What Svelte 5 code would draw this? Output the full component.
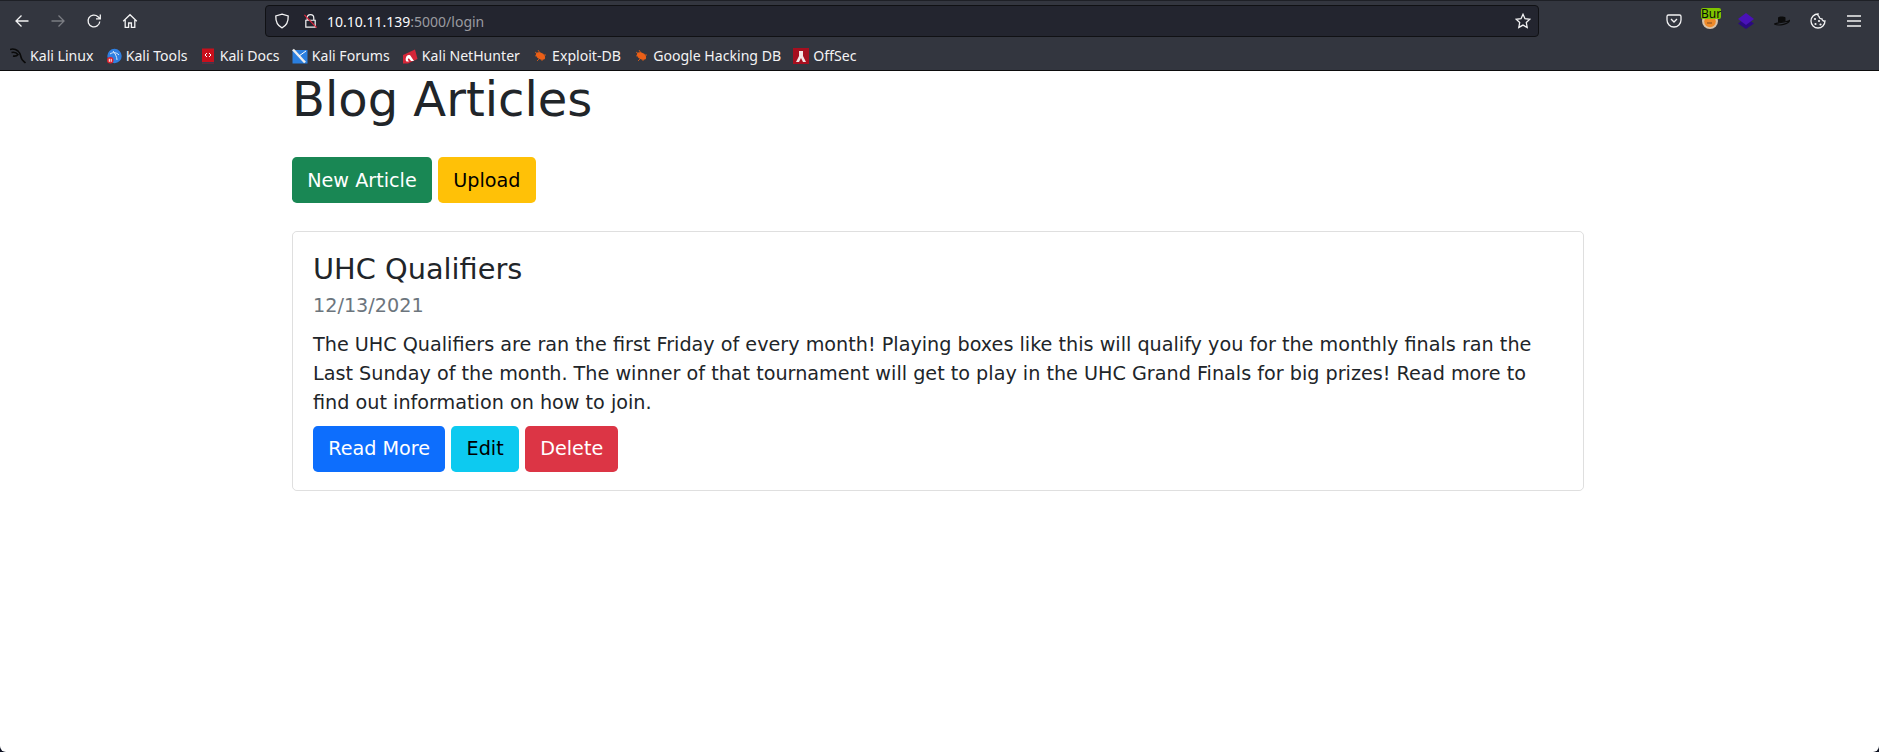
<script>
  const bookmarks = [
    { name: 'Kali Linux', icon: 'kali' },
    { name: 'Kali Tools', icon: 'tools' },
    { name: 'Kali Docs', icon: 'docs' },
    { name: 'Kali Forums', icon: 'forums' },
    { name: 'Kali NetHunter', icon: 'hunter' },
    { name: 'Exploit-DB', icon: 'bug' },
    { name: 'Google Hacking DB', icon: 'bug' },
    { name: 'OffSec', icon: 'offsec' }
  ];
</script>

<div class="page">
  <header class="chrome">
    <div class="nav">
      <div class="nav-buttons">
        <svg class="ico" viewBox="0 0 16 16"><path d="M14.5 8H2M7.5 2.5 2 8l5.500 5.500" /></svg>
        <svg class="ico dim" viewBox="0 0 16 16"><path d="M1.500 8H14M8.500 2.500 14 8l-5.500 5.500" /></svg>
        <svg class="ico" viewBox="0 0 16 16"><path d="M13.800 8.500A5.900 5.900 0 1 1 12 3.700L14 5.600M14.300 1.500v4.300H10" /></svg>
        <svg class="ico" viewBox="0 0 16 16"><path d="M1.200 8.200 8 1.700l6.800 6.500M3.200 7v7.300h3.400V10h2.800v4.300h3.400V7" /></svg>
      </div>
      <div class="urlbar">
        <svg class="ico shield" viewBox="0 0 16 16"><path d="M8 1.200 14.200 3c.2 5.500-1.500 9.600-6.200 11.800C3.300 12.600 1.600 8.500 1.800 3z" /></svg>
        <svg class="ico lock" viewBox="0 0 16 16">
          <path d="M4.500 7V4.800a3.500 3.500 0 0 1 7 0V7M3 7.200h10v7.300H3z" />
          <path class="slash" d="M1.500 1.500 14.500 15" />
        </svg>
        <span class="url"><b>10.10.11.139</b>:5000/login</span>
        <svg class="ico star" viewBox="0 0 16 16"><path d="m8 1.300 2 4.400 4.800.6-3.500 3.300.9 4.800L8 12.100l-4.200 2.300.9-4.800-3.500-3.300L6 5.700z" /></svg>
      </div>
      <div class="addons">
        <svg class="ico" viewBox="0 0 16 16"><path d="M2.500 2h11A1.500 1.500 0 0 1 15 3.500V7a7 7 0 0 1-14 0V3.500A1.500 1.500 0 0 1 2.500 2zM5 6l3 3 3-3" /></svg>
        <div class="burp">
          <svg viewBox="0 0 16 16"><circle cx="8" cy="8" r="8" fill="#d9c2a8" /><circle cx="8" cy="8.500" r="5.800" fill="#ef8a2a" /><path d="M5 10h5" stroke="#7a4a20" fill="none" /></svg>
          <span class="badge">Bur</span>
        </div>
        <svg class="addon" viewBox="0 0 16 16"><path d="M8 5 16 10.500 8 16 0 10.500z" fill="#2b0a80" /><path d="M8 0 16 6 8 12 0 6z" fill="#4a12b8" /></svg>
        <svg class="addon" viewBox="0 0 16 16"><path d="M4 9.500V4.500c1.500-1.200 6-1.200 7.500 0v4z" fill="#0c0c0c" /><path d="M.5 11C3 9.500 12 9.500 15.500 7.500 15 10.500 5 13.500.5 11z" fill="none" stroke="#0c0c0c" stroke-width="1.200" /></svg>
        <svg class="ico" viewBox="0 0 16 16">
          <path d="M8 1a7 7 0 1 0 7 7c-1.500.3-2.800-.6-3-2-1.500 0-2.800-1-3-2.500C8 3 7.700 2 8 1z" />
          <circle class="dot" cx="5" cy="6" r="1.100" /><circle class="dot" cx="9" cy="8" r="1.100" /><circle class="dot" cx="5.500" cy="11" r="1.100" /><circle class="dot" cx="10.500" cy="11.500" r="1.100" />
        </svg>
        <svg class="ico menu" viewBox="0 0 16 16"><path d="M1 3h14M1 8h14M1 13h14" /></svg>
      </div>
    </div>
    <nav class="bookmarks">
      {#each bookmarks as b}
        <span class="bookmark">
          <svg class="fav" viewBox="0 0 16 16">
            {#if b.icon === 'kali'}
              <path d="M0 1.500c3-1 6 0 8 1.500 2.500 2 2.500 5 3.500 7.500.5 1.500 2 2.500 4 4.500M1.500 4.500c2-.5 5 0 6.500 2-1 1.500-2.500 2-5 1.500" fill="none" stroke="#0a0a0a" stroke-width="1.600" />
            {:else if b.icon === 'tools'}
              <circle cx="8.500" cy="8" r="7.200" fill="#2f7fe0" />
              <path d="M4 6c3-2 6-2 9 1M7 3c2 2 4 6 4 9" fill="none" stroke="#d8e8fa" />
              <rect x="1" y="9" width="6.500" height="6.500" rx="3.200" fill="#d9232e" />
              <path d="M3.300 10.800v3M5.200 10.800v3" stroke="#fff" />
            {:else if b.icon === 'docs'}
              <rect x="2" y="0.500" width="12" height="15" fill="#c8101c" />
              <rect x="2" y="14" width="12" height="1.500" fill="#3a3a50" />
              <path d="M7 5 5 7l2 2M9 5l2 2-2 2" fill="none" stroke="#fff" />
            {:else if b.icon === 'forums'}
              <rect x="0.500" y="2" width="15" height="13.500" fill="#2a7fe0" />
              <path d="M1 1.500l12 13" stroke="#eee" stroke-width="2.500" />
              <path d="M14 3 7 8" stroke="#fff" />
            {:else if b.icon === 'hunter'}
              <path d="M1 7 13 1.500 15.500 11 6 15.500H1z" fill="#d42638" />
              <path d="M4 9.500c1-3 4-3 5-1l3 4.500H9L7.500 11c-1-1-2 0-1.500 1l1 1.500H4.500C3.500 12.500 3.500 11 4 9.500z" fill="#fff" />
            {:else if b.icon === 'bug'}
              <path d="M3 4l10 7M6 2l2 3M3 8l3-1M5 13l3-3M10 13l0-3M14 7l-3 0" stroke="#c4561c" fill="none" />
              <ellipse cx="8.500" cy="8" rx="5" ry="3.300" transform="rotate(30 8.500 8)" fill="#ea5f17" />
            {:else}
              <rect width="16" height="16" fill="#a60f1f" />
              <path d="M6 3h4v5l3 6h-3L8 10l-2 4H3l3-6z" fill="#f3e4e4" />
            {/if}
          </svg>
          {b.name}
        </span>
      {/each}
    </nav>
  </header>

  <main class="content">
    <h1>Blog Articles</h1>
    <div class="actions">
      <button class="btn success">New Article</button>
      <button class="btn warning">Upload</button>
    </div>
    <article class="card">
      <h4>UHC Qualifiers</h4>
      <h6>12/13/2021</h6>
      <p>The UHC Qualifiers are ran the first Friday of every month! Playing boxes like this will qualify you for the monthly finals ran the Last Sunday of the month. The winner of that tournament will get to play in the UHC Grand Finals for big prizes! Read more to find out information on how to join.</p>
      <div class="actions">
        <button class="btn primary">Read More</button>
        <button class="btn info">Edit</button>
        <button class="btn danger">Delete</button>
      </div>
    </article>
  </main>
</div>

<style>
  :global(body) {
    background: #0c1020;
    overflow: hidden;
  }

  .page {
    height: 752px;
    background: #fff;
    border-radius: 0 0 6px 6px;
    font-family: "DejaVu Sans", sans-serif;
    color: #212529;
  }

  .chrome {
    height: 71px;
    box-sizing: border-box;
    background: #33363f;
    border-top: 1px solid #1e2026;
    border-bottom: 1px solid #0c0c0d;
    font-family: "Noto Sans", sans-serif;
  }

  .nav {
    height: 40px;
    box-sizing: border-box;
    display: flex;
    align-items: center;
    padding-right: 17px;
  }

  .nav-buttons {
    display: flex;
    gap: 20px;
    width: 265px;
    padding-left: 14px;
    box-sizing: border-box;
  }

  .ico {
    width: 16px;
    height: 16px;
    flex: none;
    fill: none;
    stroke: #f3f3f4;
    stroke-width: 1.300;
  }

  .dim {
    stroke: #7b7d83;
  }

  .urlbar {
    width: 1274px;
    height: 32px;
    box-sizing: border-box;
    display: flex;
    align-items: center;
    background: #23252f;
    border: 1px solid #101114;
    border-radius: 4px;
    padding: 0 0 0 8px;
    font-size: 14px;
  }

  .shield {
    margin-right: 13px;
  }

  .lock {
    margin-right: 9px;
    width: 15px;
  }

  .slash {
    stroke: #e0263e;
  }

  .url {
    color: #9a9ba0;
    flex: 1;
  }

  .url b {
    color: #fbfbfe;
    font-weight: 400;
  }

  .star {
    margin-right: 7px;
  }

  .addons {
    margin-left: auto;
    display: flex;
    align-items: center;
    gap: 20px;
  }

  .addon {
    width: 16px;
    height: 16px;
    flex: none;
  }

  .burp {
    position: relative;
    width: 16px;
    height: 16px;
  }

  .burp svg {
    display: block;
    width: 16px;
    height: 16px;
  }

  .badge {
    position: absolute;
    top: -5px;
    left: -1px;
    width: 20px;
    height: 11px;
    background: #7fc400;
    border-radius: 2px;
    color: #0a0a0a;
    font-size: 12px;
    line-height: 11px;
    text-align: center;
  }

  .dot {
    fill: #f3f3f4;
    stroke: none;
  }

  .menu {
    stroke-width: 1.500;
  }

  .bookmarks {
    height: 29px;
    display: flex;
    align-items: center;
    gap: 12.200px;
    padding-left: 10px;
    color: #f3f3f4;
    font-size: 14.100px;
  }

  .bookmark {
    display: flex;
    align-items: center;
    gap: 4px;
    white-space: nowrap;
  }

  .fav {
    width: 16px;
    height: 16px;
    flex: none;
  }

  .content {
    width: 1292px;
    margin-left: 292px;
    font-size: 19.200px;
    line-height: 1.500;
  }

  h1 {
    margin: 0 0 28.500px;
    font-size: 48px;
    font-weight: 500;
    line-height: 1.200;
  }

  .actions {
    display: flex;
    gap: 6.100px;
  }

  .btn {
    height: 46px;
    padding: 1px 14.200px 0;
    border: 1px solid transparent;
    border-radius: 4.800px;
    font: inherit;
    line-height: 1;
  }

  .success { background: #198754; color: #fff; }
  .warning { background: #ffc107; color: #000; }
  .primary { background: #0d6efd; color: #fff; }
  .info { background: #0dcaf0; color: #000; }
  .danger { background: #dc3545; color: #fff; }

  .card {
    margin-top: 28px;
    height: 260px;
    box-sizing: border-box;
    padding: 20px 20px;
    border: 1px solid rgba(0, 0, 0, 0.125);
    border-radius: 4.800px;
  }

  h4 {
    margin: 0 0 7.500px;
    font-size: 28.800px;
    font-weight: 500;
    line-height: 1.200;
  }

  h6 {
    margin: 0 0 14px;
    font-size: 19.200px;
    font-weight: 500;
    line-height: 1.200;
    color: #6c757d;
  }

  p {
    margin: 0 0 8px;
  }
</style>
